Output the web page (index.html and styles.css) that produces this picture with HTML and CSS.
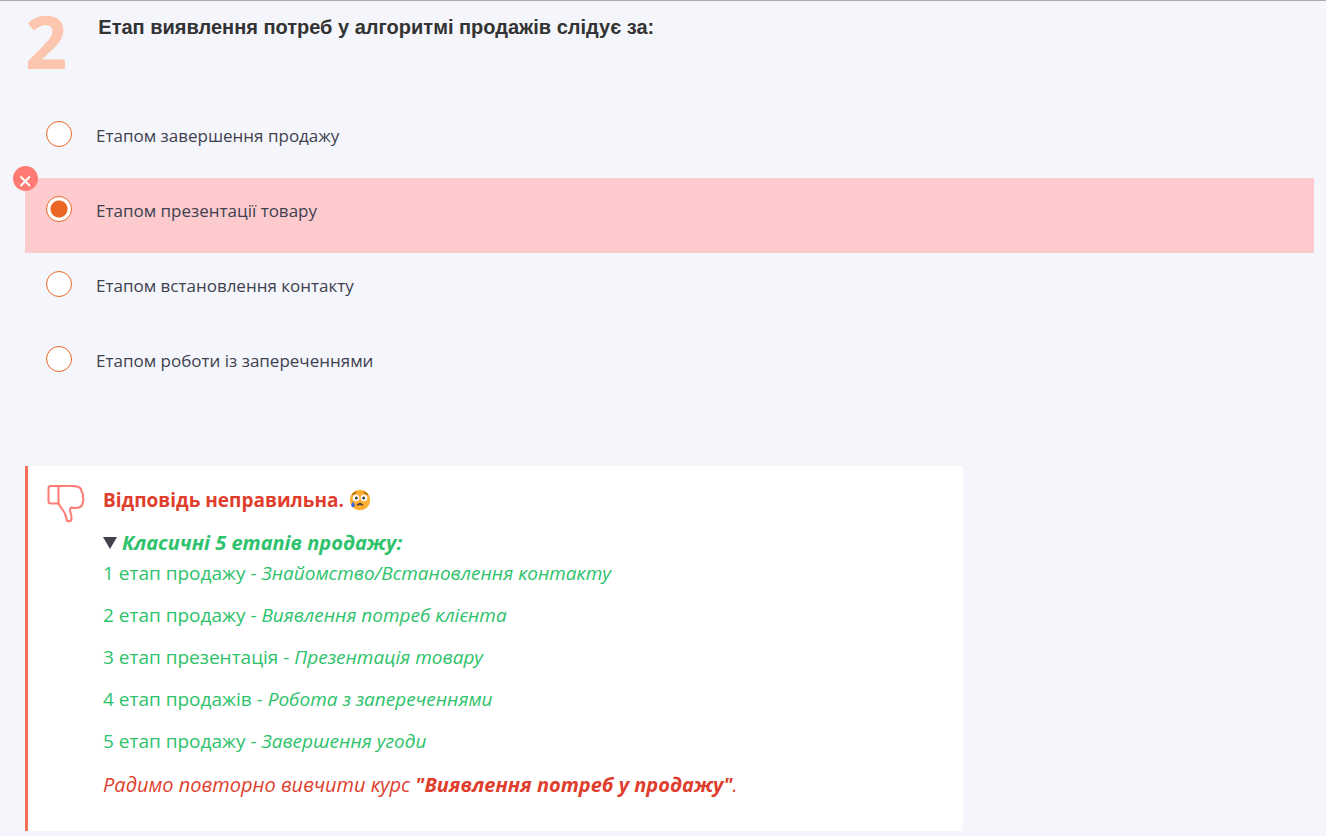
FILE: index.html
```
<!DOCTYPE html>
<html lang="uk">
<head>
    <meta charset="UTF-8">
    <meta name="viewport" content="width=device-width, initial-scale=1.0">
    <title>Тест: алгоритм продажів</title>
    <link rel="stylesheet" href="styles.css">
</head>
<body>
    <main class="quiz">
        <div class="question">
            <span class="number">2</span>
            <h1 class="title" id="question">Етап виявлення потреб у алгоритмі продажів слідує за:</h1>
        </div>

        <form class="options" role="radiogroup" aria-labelledby="question">
            <label class="option" for="answer1">
                <input type="radio" name="answer" id="answer1">
                <span>Етапом завершення продажу</span>
            </label>
            <label class="option wrong" for="answer2">
                <input type="radio" name="answer" id="answer2" checked>
                <span>Етапом презентації товару</span>
                <svg class="badge" viewBox="0 0 25 25" aria-hidden="true">
                    <circle cx="12.5" cy="12.5" r="12.5" fill="#ff7b73"/>
                    <path d="M7.5 10.5l9.500 9.500M17 10.500l-9.500 9.500" stroke="#fff" stroke-width="2"/>
                </svg>
            </label>
            <label class="option" for="answer3">
                <input type="radio" name="answer" id="answer3">
                <span>Етапом встановлення контакту</span>
            </label>
            <label class="option" for="answer4">
                <input type="radio" name="answer" id="answer4">
                <span>Етапом роботи із запереченнями</span>
            </label>
        </form>

        <section class="feedback">
            <svg class="thumb" viewBox="0 0 38 38" fill="none" stroke="#ff7b73" stroke-width="2" stroke-linejoin="round" stroke-linecap="round" aria-hidden="true">
                <path d="M11.5 1H4Q1.500 1 1.500 3.300V16Q1.500 18.500 4 18.500H11.500Z"/>
                <path d="M11.5 1.200C18 .6 26 .7 31 1.700Q34.800 3 34.600 7Q37 9 35.500 11.800Q37.500 14.300 35.600 17Q36.200 20.500 33 22C30 23.300 26 23 24 22.500Q22.300 24.500 23.500 27.500Q24.800 31 24.500 34Q24.300 36.300 22 36.300Q19.800 36.300 19.500 34C18.800 29 17.500 27 15.500 24.500Q13 21.500 11.500 18.500"/>
            </svg>
            <div class="text">
                <p class="result">
                    Відповідь неправильна.
                    <svg class="emoji" viewBox="0 0 22 22" role="img" aria-label="сумне обличчя">
                        <circle cx="11" cy="11" r="10.200" fill="#fdae33"/>
                        <path d="M3.500 5.800Q5 3.500 7.500 3.200M14.500 3.200Q17 3.500 18.500 5.800" fill="none" stroke="#925f16" stroke-width="1.200"/>
                        <circle cx="7" cy="9" r="3.300" fill="#fff"/>
                        <circle cx="15" cy="9" r="3.300" fill="#fff"/>
                        <circle cx="7.300" cy="9" r="1.500" fill="#483c43"/>
                        <circle cx="14.700" cy="9" r="1.500" fill="#483c43"/>
                        <path d="M8 16.200Q11 12.200 14 16.200Q11 14.800 8 16.200Z" fill="#483c43" stroke="#483c43"/>
                        <path d="M4 12.500Q2.200 15 2.300 16.500Q2.500 18.300 4 18.300Q5.500 18.300 5.700 16.500Q5.700 15 4 12.500Z" fill="#3568f2"/>
                    </svg>
                </p>
                <details class="stages" open>
                    <summary>Класичні 5 етапів продажу:</summary>
                    <p>1 етап продажу - <em>Знайомство/Встановлення контакту</em></p>
                    <p>2 етап продажу - <em>Виявлення потреб клієнта</em></p>
                    <p>3 етап презентація - <em>Презентація товару</em></p>
                    <p>4 етап продажів - <em>Робота з запереченнями</em></p>
                    <p>5 етап продажу - <em>Завершення угоди</em></p>
                </details>
                <p class="advice">Радимо повторно вивчити курс <strong>"Виявлення потреб у продажу"</strong>.</p>
            </div>
        </section>
    </main>
</body>
</html>
```
FILE: styles.css
```
* {
    box-sizing: border-box;
}

body {
    margin: 0;
    background-color: #f4f6fb;
    color: #40404f;
    font-family: "Open Sans", "Noto Sans", sans-serif;
}

p {
    margin: 0;
}

.quiz {
    border-top: 1px solid #a9a9b1;
    padding: 0 12px 5px 25px;
}

.question {
    display: flex;
    gap: 31px;
    height: 102px;
}

.number {
    color: #fcc5ad;
    font-size: 74px;
    line-height: 80px;
    font-weight: bold;
}

.title {
    margin: 14px 0 0;
    color: #333;
    font-family: "Liberation Sans", Arial, sans-serif;
    font-size: 20px;
    line-height: 24px;
}

.option {
    display: flex;
    position: relative;
    gap: 24px;
    height: 75px;
    padding: 18px 21px;
    font-size: 17px;
    line-height: 30px;
    cursor: pointer;
}

.option input {
    appearance: none;
    width: 26px;
    height: 26px;
    margin: 0;
    border: 1px solid #ec6623;
    border-radius: 50%;
    background-color: #fff;
}

.option input:checked {
    background-image: radial-gradient(circle, #ec6623 8px, #fff 9px);
}

.wrong {
    background-color: #fdcbce;
}

.badge {
    position: absolute;
    top: -12px;
    left: -12px;
    width: 25px;
    height: 25px;
}

.feedback {
    display: flex;
    gap: 18px;
    max-width: 938px;
    margin-top: 63px;
    padding: 19px 19px 31px;
    border-left: 3px solid #f36f56;
    background-color: #fff;
    font-size: 19px;
    line-height: 30px;
}

.thumb {
    flex: none;
    width: 38px;
    height: 38px;
}

.result {
    margin-bottom: 13px;
    color: #e03e2d;
    font-weight: bold;
}

.emoji {
    width: 22px;
    height: 22px;
    vertical-align: -4px;
}

.stages {
    margin-bottom: 14px;
    color: #2dc26b;
}

.stages summary {
    display: flex;
    align-items: center;
    gap: 5px;
    font-size: 20px;
    font-style: italic;
    font-weight: bold;
    cursor: pointer;
}

.stages summary::before {
    content: "";
    border: 7px solid transparent;
    border-top: 12px solid #40404f;
    border-bottom: 0;
}

.stages p + p {
    margin-top: 12px;
}

.advice {
    color: #e03e2d;
    font-size: 20px;
    font-style: italic;
}
```
